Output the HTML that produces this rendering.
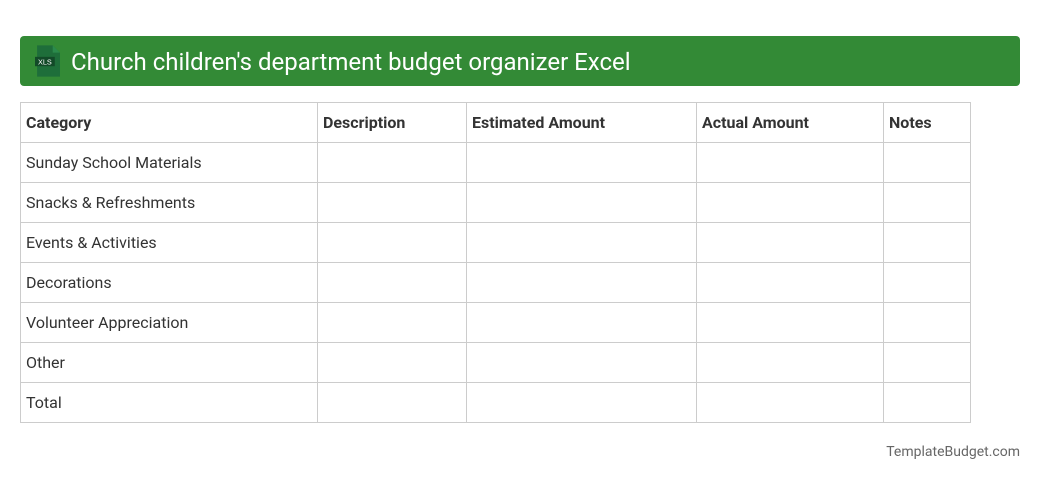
<!DOCTYPE html>
<html><head><style>
body{margin:0;width:1040px;height:480px;background:#fff;font-family:"Roboto","Liberation Sans",sans-serif;position:relative;overflow:hidden}
.hd{position:absolute;left:20px;top:36px;width:1000px;height:50px;background:#338a36;border-radius:4px}
.hd span{position:absolute;left:51px;top:12px;color:#fff;font-size:24px;line-height:28px}
table{position:absolute;left:20px;top:102px;border-collapse:collapse;table-layout:fixed;width:950px}
td{border:1px solid #ccc;height:40px;padding:0 0 0 5px;font-size:16px;color:#333;box-sizing:border-box}
tr:first-child td{font-weight:bold}
.ft{position:absolute;right:20px;top:444px;font-size:14px;color:#666}
</style></head><body>
<div class="hd">
<svg style="position:absolute;left:15px;top:9px" width="25" height="32" viewBox="0 0 24 30">
<path d="M2 0H17L24 7V30H2Z" fill="#1e6e3a"/><path d="M17 0V7H24Z" fill="#2b8a4c"/>
<rect x="0" y="11" width="19" height="9" fill="#124a28"/>
<text x="9.5" y="18.5" font-size="7" fill="#fff" text-anchor="middle" font-family="Liberation Sans">XLS</text></svg>
<span>Church children's department budget organizer Excel</span></div>
<table>
<colgroup><col style="width:297px"><col style="width:149px"><col style="width:230px"><col style="width:187px"><col style="width:87px"></colgroup>
<tr><td>Category</td><td>Description</td><td>Estimated Amount</td><td>Actual Amount</td><td>Notes</td></tr>
<tr><td>Sunday School Materials</td><td></td><td></td><td></td><td></td></tr>
<tr><td>Snacks &amp; Refreshments</td><td></td><td></td><td></td><td></td></tr>
<tr><td>Events &amp; Activities</td><td></td><td></td><td></td><td></td></tr>
<tr><td>Decorations</td><td></td><td></td><td></td><td></td></tr>
<tr><td>Volunteer Appreciation</td><td></td><td></td><td></td><td></td></tr>
<tr><td>Other</td><td></td><td></td><td></td><td></td></tr>
<tr><td>Total</td><td></td><td></td><td></td><td></td></tr>
</table>
<div class="ft">TemplateBudget.com</div>
</body></html>
